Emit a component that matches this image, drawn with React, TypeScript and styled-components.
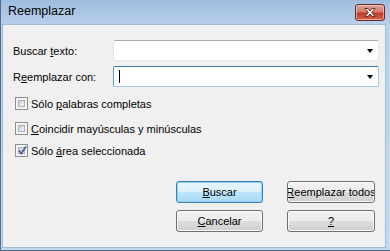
import React from "react";
import styled, { createGlobalStyle } from "styled-components";

const Global = createGlobalStyle`
  html, body { margin: 0; padding: 0; background: #ffffff; }
  * { box-sizing: border-box; }
`;

const Window = styled.div`
  width: 390px;
  height: 251px;
  display: flex;
  flex-direction: column;
  background: linear-gradient(to bottom, #9fbcdf 0px, #b9d1ec 25px, #c3d9f0 100%);
  border: 1px solid #4f6d91;
  border-top: none;
  border-right: none;
  position: relative;
  overflow: hidden;
`;

const TitleBar = styled.div`
  height: 24px;
  flex: none;
  display: flex;
  align-items: center;
  justify-content: space-between;
  padding: 0 5px 2px 7px;
  font-family: "Liberation Sans", Arial, sans-serif;
  font-size: 12.5px;
  color: #000;
`;

const CloseButton = styled.div`
  width: 30px;
  height: 17px;
  margin-top: 2px;
  border: 1px solid #6b2a25;
  border-radius: 3px;
  background: linear-gradient(to bottom, #e0a59b 0%, #d47a6c 45%, #bf3a27 55%, #d4644d 100%);
  box-shadow: inset 0 0 0 1px rgba(255, 220, 210, 0.55);
  display: flex;
  align-items: center;
  justify-content: center;
`;

const Client = styled.div`
  flex: 1;
  margin: 0 4px 2px 1px;
  background: #f0f0f0;
  border: 1px solid #a5bcd6;
  display: flex;
  flex-direction: column;
  padding: 15px 6px 0 10px;
  font-family: "Liberation Sans", Arial, sans-serif;
  font-size: 11px;
  color: #000;
`;

const FieldRow = styled.div<{ $mt: number }>`
  display: flex;
  align-items: center;
  height: 21px;
  margin-top: ${(p) => p.$mt}px;
`;

const Label = styled.div`
  width: 100px;
  flex: none;
`;

const U = styled.span`
  text-decoration: underline;
  text-underline-offset: 1px;
`;

const Combo = styled.div<{ $focused?: boolean }>`
  flex: 1;
  height: 21px;
  background: #fff;
  border: 1px solid ${(p) => (p.$focused ? "#a4c9e3" : "#e3e9ef")};
  border-top-color: ${(p) => (p.$focused ? "#3d7bad" : "#abadb3")};
  border-left-color: ${(p) => (p.$focused ? "#5b9bc7" : "#e2e3ea")};
  border-radius: 2px;
  display: flex;
  align-items: center;
  justify-content: space-between;
  padding: 0 5px 0 5px;
`;

const Caret = styled.div`
  width: 1px;
  height: 13px;
  background: #000;
`;

const Arrow = styled.div`
  width: 0;
  height: 0;
  margin-left: auto;
  border-left: 3.5px solid transparent;
  border-right: 3.5px solid transparent;
  border-top: 4px solid #000;
`;

const CheckRow = styled.div<{ $mt: number }>`
  display: flex;
  align-items: center;
  height: 13px;
  gap: 3px;
  margin-top: ${(p) => p.$mt}px;
  padding-left: 2px;
`;

const Box = styled.div`
  width: 13px;
  height: 13px;
  flex: none;
  border: 1px solid #8e8f8f;
  background: #f4f4f4;
  padding: 2px;
  display: flex;
`;

const BoxInner = styled.div`
  flex: 1;
  border: 1px solid #aeb3b9;
  background: linear-gradient(135deg, #cbcfd5 0%, #e4e6ea 60%, #f6f6f6 100%);
  position: relative;
`;

const CheckSvg = styled.svg`
  position: absolute;
  left: -2px;
  top: -3px;
`;

const Buttons = styled.div`
  display: grid;
  grid-template-columns: 87px 88px;
  column-gap: 24px;
  row-gap: 7px;
  margin-top: 24px;
  margin-left: 163px;
`;

const Button = styled.div<{ $default?: boolean }>`
  height: 22px;
  border-radius: 3px;
  border: 1px solid ${(p) => (p.$default ? "#3c7fb1" : "#707070")};
  background: ${(p) =>
    p.$default
      ? "linear-gradient(to bottom, #eaf6fd 0%, #d9f0fc 50%, #bee6fd 50%, #a7d9f5 100%)"
      : "linear-gradient(to bottom, #f2f2f2 0%, #ebebeb 50%, #dddddd 50%, #cfcfcf 100%)"};
  box-shadow: inset 0 0 0 1px ${(p) => (p.$default ? "#8fd2f3" : "rgba(255,255,255,0.8)")};
  display: flex;
  align-items: center;
  justify-content: center;
  white-space: nowrap;
  overflow: hidden;
`;

export default function App() {
  return (
    <>
      <Global />
      <Window>
        <TitleBar>
          <span>Reemplazar</span>
          <CloseButton>
            <svg width="14" height="11" viewBox="0 0 14 11">
              <path
                d="M2 1.5 L5 1.5 L7 4 L9 1.5 L12 1.5 L8.6 5.5 L12 9.5 L9 9.5 L7 7 L5 9.5 L2 9.5 L5.4 5.5 Z"
                fill="#ffffff"
                stroke="#5a2520"
                strokeWidth="0.9"
                strokeLinejoin="round"
              />
            </svg>
          </CloseButton>
        </TitleBar>
        <Client>
          <FieldRow $mt={0}>
            <Label>
              Buscar <U>t</U>exto:
            </Label>
            <Combo>
              <Arrow />
            </Combo>
          </FieldRow>
          <FieldRow $mt={5}>
            <Label>
              R<U>e</U>emplazar con:
            </Label>
            <Combo $focused>
              <Caret />
              <Arrow />
            </Combo>
          </FieldRow>
          <CheckRow $mt={10}>
            <Box>
              <BoxInner />
            </Box>
            <span>
              Sólo <U>p</U>alabras completas
            </span>
          </CheckRow>
          <CheckRow $mt={12}>
            <Box>
              <BoxInner />
            </Box>
            <span>
              <U>C</U>oincidir mayúsculas y minúsculas
            </span>
          </CheckRow>
          <CheckRow $mt={9}>
            <Box>
              <BoxInner>
                <CheckSvg width="11" height="11" viewBox="0 0 11 11">
                  <path
                    d="M2 5.5 L4.3 8.5 L9 1.5"
                    fill="none"
                    stroke="#4a5f97"
                    strokeWidth="1.8"
                  />
                </CheckSvg>
              </BoxInner>
            </Box>
            <span>
              Sólo <U>á</U>rea seleccionada
            </span>
          </CheckRow>
          <Buttons>
            <Button $default>
              <U>B</U>uscar
            </Button>
            <Button>
              <U>R</U>eemplazar todos
            </Button>
            <Button>
              <U>C</U>ancelar
            </Button>
            <Button>
              <U>?</U>
            </Button>
          </Buttons>
        </Client>
      </Window>
    </>
  );
}
